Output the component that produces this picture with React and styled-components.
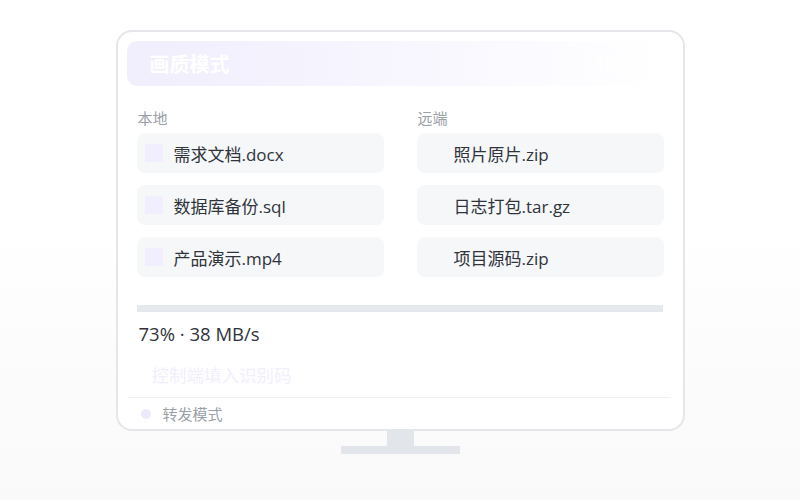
import styled, { createGlobalStyle } from 'styled-components'

const GlobalStyle = createGlobalStyle`
  html, body {
    margin: 0;
    padding: 0;
  }
  body {
    font-family: "Open Sans", "Noto Sans CJK SC", sans-serif;
    background: linear-gradient(180deg, #ffffff 0%, #ffffff 45%, #f9f9fa 100%);
    width: 800px;
    height: 500px;
    overflow: hidden;
  }
`

const Stage = styled.div`
  display: flex;
  flex-direction: column;
  align-items: center;
  padding-top: 30px;
`

const Screen = styled.div`
  width: 565px;
  height: 388px;
  border: 2px solid #e4e6ea;
  border-radius: 16px;
  background: #ffffff;
  display: flex;
  flex-direction: column;
  padding: 9px 0 0;
  box-sizing: content-box;
`

const Header = styled.div`
  margin: 0 19px 0 9px;
  height: 45px;
  border-radius: 10px;
  background: linear-gradient(90deg, #f1eefd 0%, #f6f4fe 40%, #ffffff 100%);
  display: flex;
  align-items: center;
  justify-content: space-between;
  padding: 0 22px 0 23px;
`

const HeaderTitle = styled.span`
  color: #ffffff;
  font-size: 20px;
  font-weight: 700;
`

const HeaderBadge = styled.span`
  color: #ffffff;
  font-size: 16px;
  font-weight: 700;
`

const Columns = styled.div`
  display: grid;
  grid-template-columns: 247px 247px;
  column-gap: 33px;
  margin: 22px 0 0 19px;
`

const Column = styled.div`
  display: flex;
  flex-direction: column;
  gap: 12px;
`

const ColumnLabel = styled.div`
  font-size: 15px;
  color: #9aa0a8;
  height: 20px;
  line-height: 20px;
  margin: 0 0 -7px 1px;
`

const FileRow = styled.div`
  height: 40px;
  border-radius: 8px;
  background: #f6f7f9;
  display: flex;
  align-items: center;
  padding-left: 8px;
  gap: 11px;
`

const FileIcon = styled.span`
  width: 18px;
  height: 18px;
  background: ${p => (p.$hidden ? 'transparent' : '#f1eefd')};
  flex: none;
`

const FileName = styled.span`
  font-size: 17px;
  color: #2f343b;
`

const Progress = styled.div`
  margin: 28px 20px 0 19px;
  height: 7px;
  background: #e5e8ec;
`

const Stats = styled.div`
  margin: 10px 0 0 21px;
  font-size: 18.5px;
  color: #2f343b;
  height: 24px;
  line-height: 24px;
`

const CodeHint = styled.div`
  margin: 17px 0 0 34px;
  font-size: 17.5px;
  color: #f1effc;
  height: 24px;
  line-height: 24px;
`

const Footer = styled.div`
  margin: 10px 12px 0 10px;
  border-top: 1px solid #eff0f3;
  display: flex;
  align-items: center;
  gap: 12px;
  padding: 6px 0 0 13px;
`

const Dot = styled.span`
  width: 10px;
  height: 10px;
  border-radius: 50%;
  background: #ece9fb;
`

const FooterText = styled.span`
  font-size: 15px;
  color: #9aa0a8;
  line-height: 20px;
`

const Neck = styled.div`
  width: 27px;
  height: 15px;
  background: #e2e5ea;
`

const Base = styled.div`
  width: 119px;
  height: 8px;
  background: #e2e5ea;
`

const local = ['需求文档.docx', '数据库备份.sql', '产品演示.mp4']
const remote = ['照片原片.zip', '日志打包.tar.gz', '项目源码.zip']

function FileList({ label, files, hideIcon }) {
  return (
    <Column>
      <ColumnLabel>{label}</ColumnLabel>
      {files.map(name => (
        <FileRow key={name}>
          <FileIcon $hidden={hideIcon} />
          <FileName>{name}</FileName>
        </FileRow>
      ))}
    </Column>
  )
}

export default function App() {
  return (
    <>
      <GlobalStyle />
      <Stage>
        <Screen>
          <Header>
            <HeaderTitle>画质模式</HeaderTitle>
            <HeaderBadge>1080P</HeaderBadge>
          </Header>
          <Columns>
            <FileList label="本地" files={local} />
            <FileList label="远端" files={remote} hideIcon />
          </Columns>
          <Progress />
          <Stats>73% · 38 MB/s</Stats>
          <CodeHint>控制端填入识别码</CodeHint>
          <Footer>
            <Dot />
            <FooterText>转发模式</FooterText>
          </Footer>
        </Screen>
        <Neck />
        <Base />
      </Stage>
    </>
  )
}
